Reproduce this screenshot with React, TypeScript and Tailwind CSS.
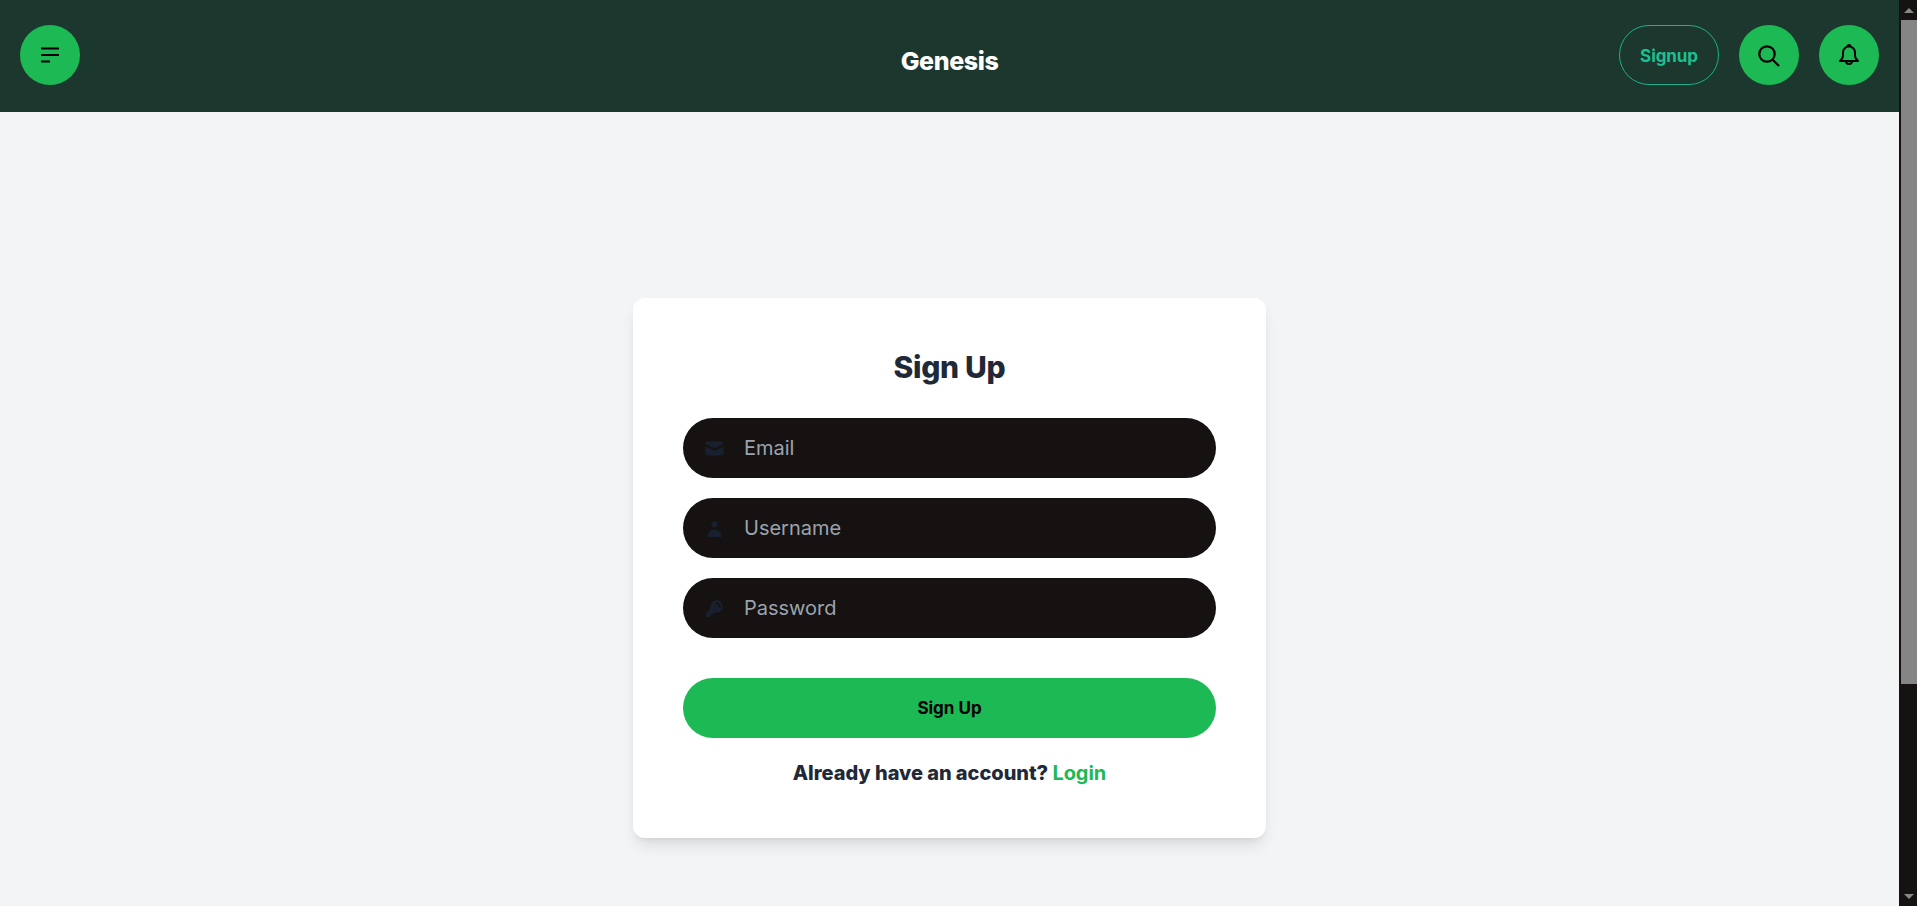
import type { ReactNode } from "react";
import { HiMail, HiUser, HiKey } from "react-icons/hi";

const display = "font-['Inter','Liberation_Sans',sans-serif]";

function RoundButton({ children }: { children: ReactNode }) {
  return (
    <button className="flex h-[60px] w-[60px] items-center justify-center rounded-full bg-[#1db954] text-black">
      {children}
    </button>
  );
}

function Field({ icon, placeholder, type }: { icon: ReactNode; placeholder: string; type: string }) {
  return (
    <div className="flex h-[60px] items-center rounded-full bg-[#151211] pl-[19px] pr-5">
      <span className="flex w-6 shrink-0 justify-center text-[#18202f]">{icon}</span>
      <input
        type={type}
        placeholder={placeholder}
        className="ml-[18px] w-full bg-transparent text-xl text-white outline-none placeholder:text-[#9ca3af]"
      />
    </div>
  );
}

function Scrollbar() {
  return (
    <aside className="flex w-[18px] shrink-0 flex-col bg-[#151211]">
      <div className="flex h-5 items-center justify-center pl-0.5">
        <span className="h-0 w-0 border-x-[5px] border-b-[5px] border-x-transparent border-b-[#8a8784]" />
      </div>
      <div className="ml-0.5 h-[664px] bg-[#858585]" />
      <div className="flex-1" />
      <div className="flex h-5 items-center justify-center pl-0.5">
        <span className="h-0 w-0 border-x-[5px] border-t-[5px] border-x-transparent border-t-[#8a8784]" />
      </div>
    </aside>
  );
}

export default function App() {
  return (
    <div className={`flex h-screen overflow-hidden bg-[#f3f4f6] ${display}`}>
      <div className="flex min-w-0 flex-1 flex-col">
        <header className="grid h-[112px] shrink-0 grid-cols-3 items-start bg-[#1b372e] px-5 pt-[25px]">
          <RoundButton>
            <svg width="20" height="18" viewBox="0 0 20 18" fill="none" stroke="currentColor" strokeWidth="2">
              <path d="M1 2.500h18M1 9h18M1 15.500h9" />
            </svg>
          </RoundButton>
          <h1 className="mt-5 text-center text-[25px] font-extrabold leading-8 tracking-[-0.4px] text-white">Genesis</h1>
          <div className="flex items-center justify-end gap-5">
            <button className="h-[60px] w-[100px] rounded-full border border-[#1db08a] pt-1 text-[17px] font-bold tracking-[-0.1px] text-[#1fbf8f]">
              Signup
            </button>
            <RoundButton>
              <svg width="24" height="24" viewBox="0 0 24 24" fill="none" stroke="currentColor" strokeWidth="2.200">
                <circle cx="10" cy="11" r="7.700" />
                <path d="M15.700 16.700L22 23" />
              </svg>
            </RoundButton>
            <RoundButton>
              <svg width="24" height="24" viewBox="0 0 24 24" fill="none" stroke="currentColor" strokeWidth="2" strokeLinejoin="round">
                <path d="M12 3.500a6 6 0 0 0-6 6v3.500c0 2-1.500 3.500-3 5h18c-1.500-1.500-3-3-3-5V9.500a6 6 0 0 0-6-6z" />
                <path d="M10.500 3.500a1.500 1.500 0 0 1 3 0" />
                <path d="M9 18a3 3 0 0 0 6 0" />
              </svg>
            </RoundButton>
          </div>
        </header>
        <main className="flex flex-1 justify-center pt-[186px]">
          <form className="h-[540px] w-[633px] rounded-xl bg-white px-[50px] pt-[50px] shadow-[0_10px_15px_-3px_rgba(0,0,0,0.1),0_4px_6px_-4px_rgba(0,0,0,0.1)]">
            <h2 className="pt-px text-center text-[30px] font-extrabold leading-9 tracking-[-0.3px] text-[#1f2937]">Sign Up</h2>
            <div className="mt-[33px] flex flex-col gap-5">
              <Field icon={<HiMail size={23} />} placeholder="Email" type="email" />
              <Field icon={<HiUser size={21} />} placeholder="Username" type="text" />
              <Field icon={<HiKey size={21} />} placeholder="Password" type="password" />
            </div>
            <button type="button" className="mt-10 h-[60px] w-full rounded-full bg-[#1db954] pt-px text-[17px] font-bold text-black">
              Sign Up
            </button>
            <p className="mt-[21px] text-center text-xl font-extrabold leading-7 tracking-[-0.05px] text-[#1f2937]">
              Already have an account? <a className="font-bold text-[#1db954]">Login</a>
            </p>
          </form>
        </main>
      </div>
      <Scrollbar />
    </div>
  );
}
